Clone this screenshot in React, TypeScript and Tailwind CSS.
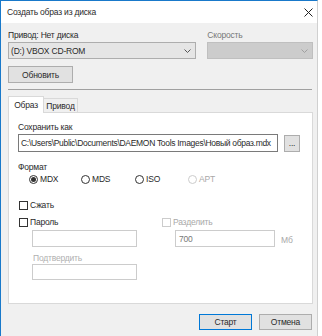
import React from "react";

const Radio = ({ label, checked, disabled }: { label: string; checked?: boolean; disabled?: boolean }) => (
  <div className={`flex items-center gap-[2px] ${disabled ? "text-[#a8a8a8]" : "text-[#2a2a2a]"}`}>
    <span
      className={`w-[9px] h-[9px] rounded-full border flex items-center justify-center bg-white ${
        disabled ? "border-[#cccccc]" : "border-[#333333]"
      }`}
    >
      {checked && <span className="w-[5px] h-[5px] rounded-full bg-[#333333]" />}
    </span>
    <span>{label}</span>
  </div>
);

const Check = ({ label, disabled }: { label: string; disabled?: boolean }) => (
  <div className={`flex items-center gap-[2px] ${disabled ? "text-[#a8a8a8]" : "text-[#2a2a2a]"}`}>
    <span className={`w-[9px] h-[9px] border bg-white ${disabled ? "border-[#cccccc]" : "border-[#333333]"}`} />
    <span>{label}</span>
  </div>
);

export default function App() {
  return (
    <div
      className="w-[322px] h-[336px] bg-white overflow-hidden text-[8.5px] leading-[12px] tracking-[-0.2px]"
      style={{ fontFamily: '"Liberation Sans", Arial, sans-serif' }}
    >
      <div className="w-[318px] h-[336px] border-l border-t border-[#1979ca] border-r border-r-[#d0d0d0] bg-[#f0f0f0] flex flex-col">
        {/* title bar */}
        <div className="h-[22px] bg-white flex items-center justify-between pl-[6px] pr-[4px] text-[#2a2a2a]">
          <span className="text-[8.5px]">Создать образ из диска</span>
          <svg width="9" height="9" viewBox="0 0 9 9">
            <path d="M0.5 0.5 L8.5 8.5 M8.5 0.5 L0.5 8.5" stroke="#222" strokeWidth="1" />
          </svg>
        </div>

        <div className="pl-[7px] pr-[4px] flex flex-col">
          {/* drive row */}
          <div className="flex mt-[6px] gap-[11px]">
            <div className="w-[189px] flex flex-col">
              <span className="text-[#2a2a2a]">Привод: Нет диска</span>
              <div className="mt-[1px] h-[17px] bg-[#e5e5e5] border border-[#adadad] flex items-center justify-between pl-[2px] pr-[4px] text-[#2a2a2a]">
                <span>(D:) VBOX CD-ROM</span>
                <svg width="7" height="4" viewBox="0 0 7 4">
                  <path d="M0.5 0.5 L3.5 3.5 L6.5 0.5" stroke="#555" fill="none" />
                </svg>
              </div>
            </div>
            <div className="w-[106px] flex flex-col">
              <span className="text-[#777]">Скорость</span>
              <div className="mt-[1px] h-[17px] bg-[#cccccc] border border-[#bfbfbf] flex items-center justify-end pr-[4px]">
                <svg width="7" height="4" viewBox="0 0 7 4">
                  <path d="M0.5 0.5 L3.5 3.5 L6.5 0.5" stroke="#a0a0a0" fill="none" />
                </svg>
              </div>
            </div>
          </div>

          <button className="mt-[7px] w-[65px] h-[17px] bg-[#e1e1e1] border border-[#adadad] text-[#2a2a2a] flex items-center justify-center">
            Обновить
          </button>

          <div className="mt-[6px] h-px bg-[#a0a0a0] mr-[1px]" />

          {/* tabs */}
          <div className="mt-[6px] flex items-end h-[17px]">
            <div className="w-[36px] h-[17px] bg-white border border-b-0 border-[#d9d9d9] flex items-center justify-center text-[#2a2a2a] relative z-10">
              Образ
            </div>
            <div className="w-[34px] h-[15px] bg-[#f0f0f0] border border-l-0 border-b-0 border-[#d9d9d9] flex items-center justify-center text-[#2a2a2a]">
              Привод
            </div>
          </div>
          <div className="-mt-px h-[192px] bg-white border border-[#d9d9d9] pl-[9px] flex flex-col">
            <span className="mt-[8px] text-[#2a2a2a]">Сохранить как</span>
            <div className="mt-[1px] flex items-center">
              <div className="w-[260px] h-[18px] border border-[#7a7a7a] flex items-center pl-[2px] text-[#2a2a2a] overflow-hidden whitespace-nowrap text-[8.5px] tracking-[-0.3px]">
                C:\Users\Public\Documents\DAEMON Tools Images\Новый образ.mdx
              </div>
              <button className="ml-[6px] w-[16px] h-[17px] bg-[#e1e1e1] border border-[#adadad] text-[#2a2a2a] flex items-center justify-center leading-[8px]">
                ...
              </button>
            </div>

            <span className="mt-[9px] text-[#2a2a2a]">Формат</span>
            <div className="mt-[0px] pl-[11px] flex">
              <div className="w-[52px]"><Radio label="MDX" checked /></div>
              <div className="w-[54px]"><Radio label="MDS" /></div>
              <div className="w-[53px]"><Radio label="ISO" /></div>
              <Radio label="APT" disabled />
            </div>

            <div className="mt-[14px] pl-[1px]"><Check label="Сжать" /></div>
            <div className="mt-[5px] pl-[1px] flex">
              <div className="w-[143px]"><Check label="Пароль" /></div>
              <Check label="Разделить" disabled />
            </div>

            <div className="mt-[2px] pl-[14px] flex items-center">
              <div className="w-[105px] h-[17px] border border-[#cccccc]" />
              <div className="ml-[38px] w-[100px] h-[17px] border border-[#cccccc] flex items-center pl-[3px] text-[#777]">
                700
              </div>
              <span className="ml-[6px] mt-[2px] text-[#a8a8a8]">Мб</span>
            </div>

            <span className="mt-[5px] pl-[15px] text-[#b0b0b0]">Подтвердить</span>
            <div className="mt-[0px] pl-[14px]">
              <div className="w-[105px] h-[16px] border border-[#cccccc]" />
            </div>
          </div>

          {/* bottom buttons */}
          <div className="mt-[10px] flex justify-end gap-[7px] mr-[1px]">
            <button className="w-[53px] h-[16px] bg-[#e1e1e1] border border-[#0078d7] text-[#2a2a2a] flex items-center justify-center">
              Старт
            </button>
            <button className="w-[53px] h-[16px] bg-[#e1e1e1] border border-[#adadad] text-[#2a2a2a] flex items-center justify-center">
              Отмена
            </button>
          </div>
        </div>
      </div>
    </div>
  );
}
